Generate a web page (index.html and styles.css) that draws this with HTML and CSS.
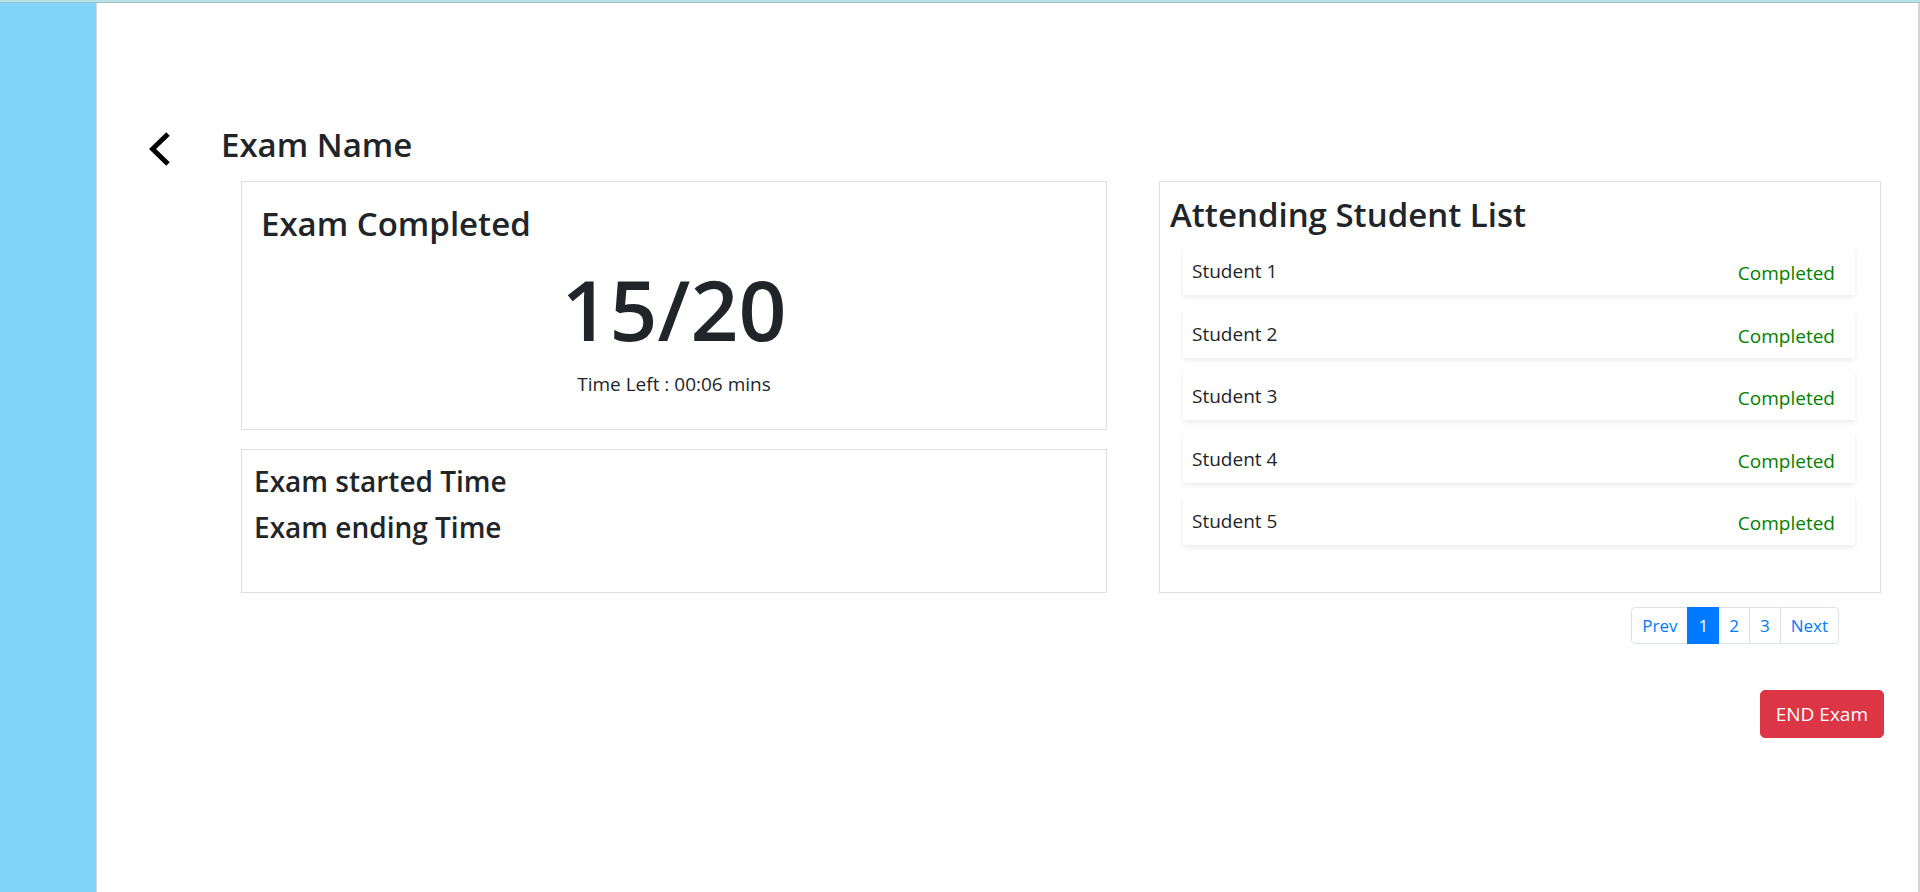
FILE: index.html
```html
<!DOCTYPE html>
<html lang="en">
<head>
<meta charset="utf-8">
<title>Exam Name</title>
<link rel="stylesheet" href="styles.css">
</head>
<body>
<div class="topbar"></div>
<div class="layout">
  <aside class="sidebar"></aside>
  <main class="main">
    <div class="header">
      <svg class="back" width="22" height="34" viewBox="0 0 22 34" aria-hidden="true">
        <polyline points="19,2 3.5,17 19,32" fill="none" stroke="#000" stroke-width="5" stroke-linejoin="miter" stroke-linecap="butt"/>
      </svg>
      <h3 class="title">Exam Name</h3>
    </div>
    <div class="content">
      <div class="col-left">
        <section class="card card-count">
          <h3 class="card-title">Exam Completed</h3>
          <div class="count">15/20</div>
          <p class="time-left">Time Left : 00:06 mins</p>
        </section>
        <section class="card card-times">
          <h4 class="time-line">Exam started Time</h4>
          <h4 class="time-line">Exam ending Time</h4>
        </section>
      </div>
      <div class="col-right">
        <section class="card card-list">
          <h3 class="list-title">Attending Student List</h3>
          <ul class="students">
            <li class="student"><span class="name">Student 1</span><span class="status">Completed</span></li>
            <li class="student"><span class="name">Student 2</span><span class="status">Completed</span></li>
            <li class="student"><span class="name">Student 3</span><span class="status">Completed</span></li>
            <li class="student"><span class="name">Student 4</span><span class="status">Completed</span></li>
            <li class="student"><span class="name">Student 5</span><span class="status">Completed</span></li>
          </ul>
        </section>
        <nav class="pagination">
          <a class="page">Prev</a>
          <a class="page active">1</a>
          <a class="page">2</a>
          <a class="page">3</a>
          <a class="page">Next</a>
        </nav>
        <button class="end-btn">END Exam</button>
      </div>
    </div>
  </main>
</div>
</body>
</html>
```

FILE: styles.css
```css
* { box-sizing: border-box; }

html, body {
  margin: 0;
  padding: 0;
  height: 100%;
}

body {
  font-family: "Open Sans", "Noto Sans", "Liberation Sans", sans-serif;
  color: #212529;
  background: #fff;
  overflow: hidden;
}

.topbar {
  height: 3px;
  background: #b6e2e6;
  border-bottom: 1px solid #98c3c8;
}

.layout {
  display: flex;
  height: calc(100% - 3px);
}

.sidebar {
  width: 97px;
  flex: 0 0 97px;
  background: #81d4fa;
  border-right: 1px solid #d6d6d6;
}

.main {
  flex: 1;
  border-right: 2px solid #d4d4d4;
  padding-top: 122px;
}

.header {
  display: flex;
  align-items: flex-start;
  height: 56px;
  padding-left: 52px;
}

.back {
  display: block;
  margin-top: 7px;
}

.title {
  margin: 0 0 0 50px;
  font-size: 33px;
  line-height: 40px;
  font-weight: 600;
}

.content {
  display: flex;
  gap: 52px;
  padding-left: 144px;
}

.col-left {
  width: 866px;
  display: flex;
  flex-direction: column;
  gap: 19px;
}

.col-right {
  width: 725px;
  display: flex;
  flex-direction: column;
  align-items: flex-end;
}

.card {
  border: 1px solid #dfdfdf;
  background: #fff;
}

.card-count {
  height: 249px;
  padding: 22px 19px 0;
}

.card-title {
  margin: 0;
  font-size: 33px;
  line-height: 40px;
  font-weight: 600;
}

.count {
  margin-top: 15px;
  text-align: center;
  font-size: 84px;
  line-height: 100px;
  font-weight: 600;
}

.time-left {
  margin: 11px 0 0;
  text-align: center;
  font-size: 19px;
  line-height: 28px;
}

.card-times {
  height: 144px;
  padding: 13px 12px 0;
}

.time-line {
  margin: 0 0 10px;
  font-size: 28px;
  line-height: 36px;
  font-weight: 600;
}

.card-list {
  align-self: flex-start;
  width: 722px;
  height: 412px;
  padding: 13px 25px 0 10px;
}

.list-title {
  margin: 0 0 10px;
  font-size: 33px;
  line-height: 40px;
  font-weight: 600;
}

.students {
  list-style: none;
  margin: 0 0 0 13px;
  padding: 0;
  display: flex;
  flex-direction: column;
  gap: 12.5px;
}

.student {
  height: 50px;
  display: flex;
  justify-content: space-between;
  align-items: flex-start;
  padding: 12px 20px 0 9px;
  background: #fff;
  box-shadow: 0 2.5px 5px rgba(0, 0, 0, 0.08), 0 0 1px rgba(0, 0, 0, 0.03);
  font-size: 19px;
  line-height: 28px;
}

.status {
  color: #008000;
  margin-top: 2px;
}

.pagination {
  display: flex;
  margin-top: 14px;
  margin-right: 45px;
}

.page {
  display: block;
  padding: 0 10px;
  font-size: 17px;
  line-height: 35px;
  color: #007bff;
  background: #fff;
  border: 1px solid #dee2e6;
  margin-left: -1px;
}

.page:first-child {
  margin-left: 0;
  border-radius: 4px 0 0 4px;
}

.page:last-child {
  border-radius: 0 4px 4px 0;
}

.page.active {
  background: #007bff;
  border-color: #007bff;
  color: #fff;
  position: relative;
  z-index: 1;
}

.end-btn {
  margin-top: 46px;
  height: 48px;
  padding: 0 15px;
  font-family: "Open Sans", "Noto Sans", "Liberation Sans", sans-serif;
  font-size: 19px;
  line-height: 46px;
  color: #fff;
  background: #dc3545;
  border: 1px solid #dc3545;
  border-radius: 5px;
}
```
